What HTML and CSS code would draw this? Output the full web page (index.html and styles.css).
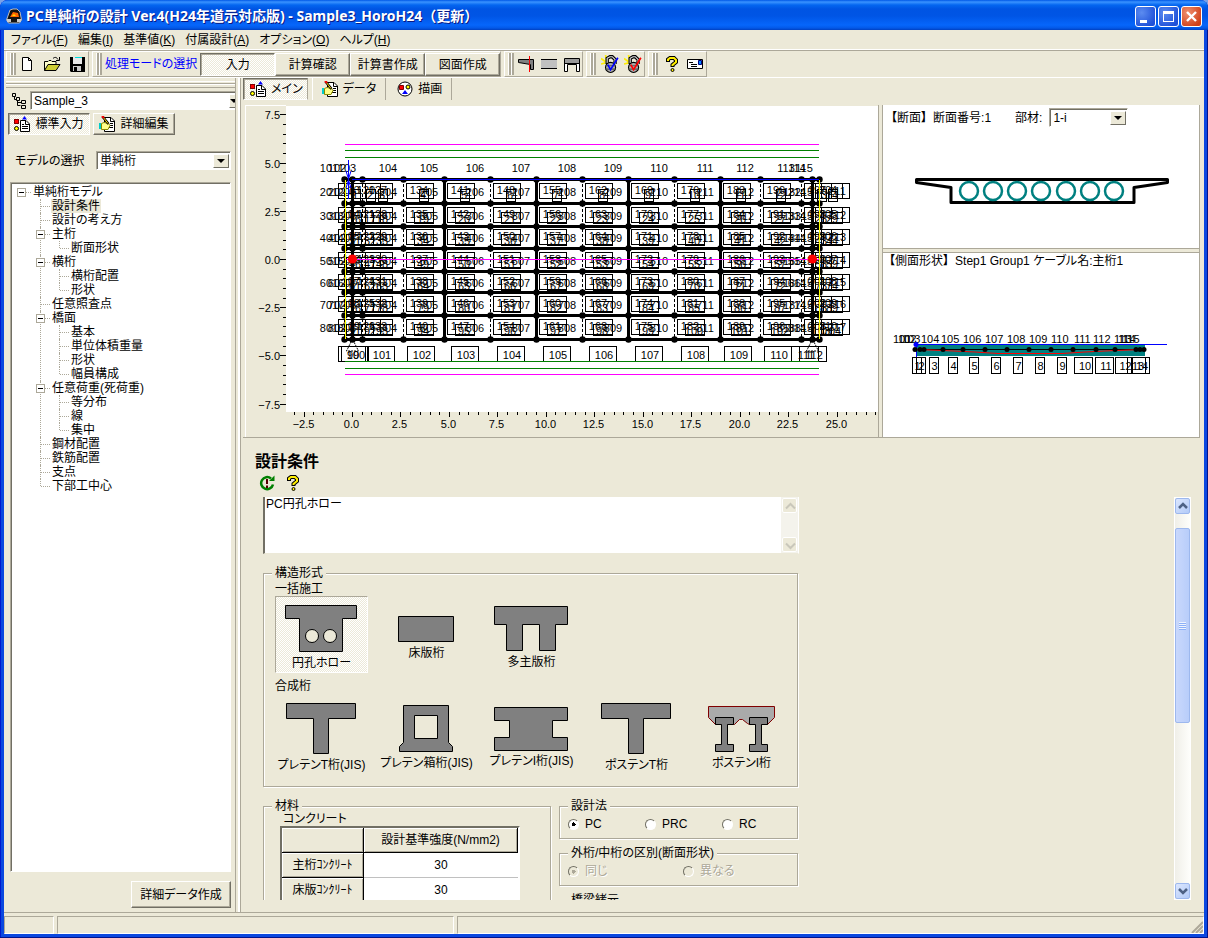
FILE: index.html
```html
<!DOCTYPE html>
<html lang="ja">
<head>
<meta charset="utf-8">
<title>PC単純桁の設計 Ver.4</title>
<link rel="stylesheet" href="styles.css">
</head>
<body>
<svg class="defs" width="0" height="0" aria-hidden="true">
  <symbol id="i-form" viewBox="0 0 16 16"><rect x="0.5" y="3.5" width="4" height="4" fill="#f00" stroke="#800000"/><circle cx="2.5" cy="12.5" r="2" fill="#ff0" stroke="#000"/><path d="M8 3.5 10.500 0 13 3.500z" fill="#00f"/><path d="M6.500 4.500H12L15.500 8V15.500H6.500z" fill="#fff" stroke="#000"/><path d="M11.500 4.500V8.500H15M8 8.500h2M8 10.500h6M8 12.500h6" stroke="#000" fill="none"/></symbol>
  <symbol id="i-edit" viewBox="0 0 16 16"><path d="M5.500 1.500H12L15.500 5V15.500H5.500z" fill="#fff" stroke="#000"/><path d="M11.500 1.500V5.500H15M11 7.500h3M11 9.500h3M9 11.500h5" stroke="#000" fill="none"/><path d="M2.500 7.500 5 6.500 9.500 7.500 11 9.500 9 13.500H2.500z" fill="#ff8" stroke="#880"/><path d="M0 7h2v6H0z" fill="#0cc"/><path d="M3.500 0.500 9.500 8" stroke="#000" stroke-width="2.500"/><path d="M4 1 9 7.500" stroke="#fd0"/><path d="M3 0l2 2" stroke="#f00" stroke-width="2"/></symbol>
  <symbol id="i-help" viewBox="0 0 16 16"><path d="M4 6V3.500L6 2H10L12 4V6L8.500 9V11" fill="none" stroke="#000" stroke-width="4"/><path d="M4 5V3.500L6 2H10L12 4V6L8.500 9V10" fill="none" stroke="#fe0" stroke-width="2"/><circle cx="8.500" cy="14" r="1.500" fill="#fe0" stroke="#000"/></symbol>
  <symbol id="i-lock" viewBox="0 0 16 16"><path d="M0 3l4 3M4 0l1 5M0 8l4-1" stroke="#fe0" stroke-width="1.500"/><path d="M5.500 8V3L8 1.500H10L12.500 4V8" fill="none" stroke="#000" stroke-width="3"/><path d="M5.500 7V3L8 1.500H10L12.500 4V8" fill="none" stroke="#ddd"/><circle cx="8.500" cy="11" r="4.500" fill="#aaa" stroke="#000"/><path d="M4 9.500H13M4 12.500H13" stroke="#555"/><path d="M6 8.500 8.500 13 15 2.500" fill="none" stroke="currentColor" stroke-width="1.500"/></symbol>
</svg>

<div class="window">
  <header class="titlebar">
    <svg class="app-icon" width="16" height="16" viewBox="0 0 16 16"><path d="M4 2 7 1h4l3 3 1.500 8-2 3h-11l-2-3z" fill="#111" stroke="#bbb"/><path d="M4 9 7 4l5 1 1 4z" fill="#f60"/><path d="M6 8 8 6l2 2z" fill="#fd0"/><path d="M1 11h4v3H1zM11 11h4v3h-4z" fill="#ccc"/></svg>
    <h1>PC単純桁の設計 Ver.4(H24年道示対応版) - Sample3_HoroH24（更新）</h1>
    <button class="win-btn" aria-label="最小化"><svg width="19" height="19"><path d="M4 13h7v3H4z" fill="#fff"/></svg></button>
    <button class="win-btn" aria-label="最大化"><svg width="19" height="19"><path d="M4 4h11v11H4zM5 7v7h9V7z" fill="#fff" fill-rule="evenodd"/></svg></button>
    <button class="win-btn close" aria-label="閉じる"><svg width="19" height="19"><path d="M5 5 14 14M14 5 5 14" stroke="#fff" stroke-width="2.400"/></svg></button>
  </header>

  <div class="frame">
    <nav class="menubar">
      <button>ファイル(<u>F</u>)</button><button>編集(<u>I</u>)</button><button>基準値(<u>K</u>)</button><button>付属設計(<u>A</u>)</button><button>オプション(<u>O</u>)</button><button>ヘルプ(<u>H</u>)</button>
    </nav>

    <div class="toolbar">
      <div class="band file">
        <button class="tool" aria-label="新規"><svg width="18" height="18" viewBox="0 0 18 18"><path d="M4.500 2.500h6l3 3v10h-9zM10.500 2.500v3h3" fill="#fff" stroke="#000"/></svg></button>
        <button class="tool" aria-label="開く"><svg width="18" height="18" viewBox="0 0 18 18"><path d="M1.500 15.500V6.500H5l1-1h2l1 1h4v3" fill="#ffc" stroke="#000"/><path d="M1.500 15.500 5 9.500h12l-4 6z" fill="#cc3" stroke="#000"/><path d="M10 3.500c2-2 4-1 5 1M16.500 2v3.500H13" fill="none" stroke="#000"/></svg></button>
        <button class="tool" aria-label="保存"><svg width="18" height="18" viewBox="0 0 18 18"><path d="M2 2h15v15H3l-1-1z"/><path d="M5 2h9v7H5z" fill="#e8e8e8"/><path d="M7 2h7v1H7z" fill="#0dd"/><path d="M5 11h8v5H5z" fill="#ccc"/><path d="M6 12h3v4H6z"/></svg></button>
      </div>
      <div class="band modes">
        <span class="mode-label">処理モードの選択</span>
        <button class="mode pressed">入力</button><button class="mode">計算確認</button><button class="mode">計算書作成</button><button class="mode">図面作成</button>
      </div>
      <div class="band">
        <button class="tool" aria-label="断面図"><svg width="18" height="18" viewBox="0 0 18 18"><path d="M1.500 4.500h15v10h-3v-5l-12-2z" fill="#808080" stroke="#000"/><path d="M12.500 1v16" stroke="#f00"/></svg></button>
        <button class="tool" aria-label="側面図"><svg width="18" height="18" viewBox="0 0 18 18"><path d="M1 5h16v8H1z" fill="#c0c0c0"/><path d="M1 4.500h16M1 13.500h16" stroke="#000"/></svg></button>
        <button class="tool" aria-label="正面図"><svg width="18" height="18" viewBox="0 0 18 18"><path d="M1.500 3.500h15v13h-3v-7h-9v7h-3z" fill="#fff" stroke="#000"/><path d="M2 4h14v4H2z" fill="#999"/><path d="M1 8.500h16" stroke="#000"/></svg></button>
      </div>
      <div class="band roomy">
        <button class="tool lock-blue" aria-label="ロック解除"><svg width="18" height="18"><use href="#i-lock"/></svg></button>
        <button class="tool lock-red" aria-label="ロック"><svg width="18" height="18"><use href="#i-lock"/></svg></button>
      </div>
      <div class="band roomy">
        <button class="tool" aria-label="ヘルプ"><svg width="16" height="16"><use href="#i-help"/></svg></button>
        <button class="tool" aria-label="メール"><svg width="18" height="18" viewBox="0 0 18 18"><path d="M1.500 4.500h15v9h-15z" fill="#fff" stroke="#000"/><path d="M3 7.500h4M5 9.500h6M5 11.500h6" stroke="#000"/><path d="M12.500 5.500h3v4h-3z" fill="#08f" stroke="#000080"/></svg></button>
      </div>
    </div>

    <div class="workspace">
      <aside class="sidebar">
        <div class="gripbar"></div>
        <div class="sample-row">
          <svg width="16" height="16" viewBox="0 0 16 16"><path d="M2.500 3v3.500h3v6h3M6 9.500h3M9 14.500" fill="none" stroke="#000"/><path d="M.5.500h3v3h-3zM4.500 4.500h3v3h-3zM9.500 7.500h4v3h-4zM9.500 12.500h4v3h-4z" fill="#ece9d8" stroke="#000"/></svg>
          <div class="combo cut"><select aria-label="サンプル"><option>Sample_3</option></select><span class="arrow"></span></div>
        </div>
        <div class="input-modes">
          <button class="pressed"><svg width="16" height="16"><use href="#i-form"/></svg>標準入力</button>
          <button class="raised"><svg width="16" height="16"><use href="#i-edit"/></svg>詳細編集</button>
        </div>
        <div class="model-row">
          <label for="model">モデルの選択</label>
          <div class="combo"><select id="model"><option>単純桁</option></select><span class="arrow"></span></div>
        </div>
        <div class="tree-box">
          <ul class="tree">
            <li class="root"><button class="toggle" aria-label="折りたたむ"></button><span>単純桁モデル</span>
              <ul>
                <li><span class="current">設計条件</span></li>
                <li><span>設計の考え方</span></li>
                <li><button class="toggle" aria-label="折りたたむ"></button><span>主桁</span><ul><li><span>断面形状</span></li></ul></li>
                <li><button class="toggle" aria-label="折りたたむ"></button><span>横桁</span><ul><li><span>横桁配置</span></li><li><span>形状</span></li></ul></li>
                <li><span>任意照査点</span></li>
                <li><button class="toggle" aria-label="折りたたむ"></button><span>橋面</span><ul><li><span>基本</span></li><li><span>単位体積重量</span></li><li><span>形状</span></li><li><span>幅員構成</span></li></ul></li>
                <li><button class="toggle" aria-label="折りたたむ"></button><span>任意荷重(死荷重)</span><ul><li><span>等分布</span></li><li><span>線</span></li><li><span>集中</span></li></ul></li>
                <li><span>鋼材配置</span></li>
                <li><span>鉄筋配置</span></li>
                <li><span>支点</span></li>
                <li><span>下部工中心</span></li>
              </ul>
            </li>
          </ul>
        </div>
        <div class="sidebar-foot"><button class="raised">詳細データ作成</button></div>
      </aside>

      <main class="content">
        <nav class="tabs">
          <button class="pressed"><svg width="16" height="16"><use href="#i-form"/></svg>メイン</button>
          <button><svg width="16" height="16"><use href="#i-edit"/></svg>データ</button>
          <button><svg width="16" height="16" viewBox="0 0 16 16"><circle cx="8" cy="8" r="7" fill="#fff" stroke="#000"/><path d="M2.500 4.500h4v4h-4z" fill="#f00" stroke="#800000"/><circle cx="11" cy="6" r="2" fill="#ff0" stroke="#000"/><path d="M5 13 8 9l3 4z" fill="#00f"/></svg>描画</button>
        </nav>

        <div class="views">
          <section class="plan-view"><svg id="plan" viewBox="245 105 633 332" preserveAspectRatio="xMinYMin meet" role="img" aria-label="平面図"></svg></section>
          <div class="side-views">
            <section class="section-view">
              <div class="view-head"><b>【</b>断面<b>】</b><span>断面番号:1</span><label for="member">部材:</label><div class="combo"><select id="member"><option>1-i</option></select><span class="arrow"></span></div></div>
              <svg id="cross" viewBox="883 130 316 118" preserveAspectRatio="xMinYMin meet" role="img" aria-label="断面図"></svg>
            </section>
            <section class="profile-view">
              <div class="view-head"><b>【</b>側面形状<b>】</b><span>Step1 Group1 ケーブル名:主桁1</span></div>
              <svg id="profile" viewBox="883 276 316 160" preserveAspectRatio="xMinYMin meet" role="img" aria-label="側面図"></svg>
            </section>
          </div>
        </div>

        <section class="editor">
          <h2>設計条件</h2>
          <div class="editor-tools">
            <button class="tool" aria-label="更新"><svg width="16" height="16" viewBox="0 0 16 16"><path d="M12 3.500A6 6 0 1 0 14 9.500" fill="none" stroke="#008000" stroke-width="2.500"/><path d="M10 6h5.500V.500z" fill="#008000"/><path d="M8 4v5M8 10.500v2.500" stroke="#500" stroke-width="2"/></svg></button>
            <button class="tool" aria-label="ヘルプ"><svg width="16" height="16"><use href="#i-help"/></svg></button>
          </div>
          <div class="editor-body">
            <div class="form">
              <div class="memo"><textarea aria-label="コメント">PC円孔ホロー</textarea>
                <div class="memo-bar"><svg width="15" height="15"><path d="M3 9.500 7.500 5 12 9.500" fill="none" stroke="#c9c7ba" stroke-width="2"/></svg><svg width="15" height="15"><path d="M3 5.500 7.500 10 12 5.500" fill="none" stroke="#c9c7ba" stroke-width="2"/></svg></div>
              </div>

              <fieldset class="types"><legend>構造形式</legend>
                <h3>一括施工</h3>
                <div class="type-row">
                  <button class="type pressed"><svg width="73" height="48"><path d="M.5.500h71v13h-14v33h-43v-33H.5z" class="conc"/><circle cx="27" cy="31" r="6.500" class="hole"/><circle cx="45" cy="31" r="6.500" class="hole"/></svg>円孔ホロー</button>
                  <button class="type"><svg width="57" height="27"><path d="M.5.500h55v25H.5z" class="conc"/></svg>床版桁</button>
                  <button class="type"><svg width="75" height="46"><path d="M.5.500h73v18h-12v26h-16v-26h-17v26h-16v-26H.5z" class="conc"/></svg>多主版桁</button>
                </div>
                <h3>合成桁</h3>
                <div class="type-row">
                  <button class="type"><svg width="71" height="52"><path d="M.5.500h69v15h-27v35h-15v-35H.5z" class="conc"/></svg>プレテンT桁(JIS)</button>
                  <button class="type"><svg width="55" height="48"><path d="M4.500.500h45v37l4 4v5H.5v-5l4-4z" class="conc"/><path d="M15.500 10.500h23v23h-23z" class="hole"/></svg>プレテン箱桁(JIS)</button>
                  <button class="type"><svg width="75" height="44"><path d="M.5.500h73v13h-15v17h15v13H.5v-13h15v-17H.5z" class="conc"/></svg>プレテンI桁(JIS)</button>
                  <button class="type"><svg width="71" height="52"><path d="M.5.500h69v15h-27v35h-15v-35H.5z" class="conc"/></svg>ポステンT桁</button>
                  <button class="type"><svg width="68" height="47"><path d="M.5.500h66v11l-7 7h-18l-2-1-5-4h-3l-5 5H7.500l-7-7z" fill="#aaa" stroke="#800000"/><path d="M7.500 11.500h18v7h-6v20h6v7h-18v-7h6v-20h-6zM41.500 11.500h18v7h-6v20h6v7h-18v-7h6v-20h-6z" class="conc"/></svg>ポステンI桁</button>
                </div>
              </fieldset>

              <div class="lower">
                <fieldset class="material"><legend>材料</legend>
                  <h3>コンクリート</h3>
                  <table><thead><tr><th></th><th>設計基準強度(N/mm2)</th></tr></thead>
                  <tbody><tr><th>主桁ｺﾝｸﾘｰﾄ</th><td>30</td></tr><tr><th>床版ｺﾝｸﾘｰﾄ</th><td>30</td></tr></tbody></table>
                </fieldset>
                <div class="options">
                  <fieldset><legend>設計法</legend><div class="radios three">
                    <label><input type="radio" name="method" checked>PC</label><label><input type="radio" name="method">PRC</label><label><input type="radio" name="method">RC</label></div></fieldset>
                  <fieldset><legend>外桁/中桁の区別(断面形状)</legend><div class="radios two">
                    <label class="off"><input type="radio" name="diff" checked disabled>同じ</label><label class="off"><input type="radio" name="diff" disabled>異なる</label></div></fieldset>
                  <fieldset class="end-line"><legend>橋梁緒元</legend></fieldset>
                </div>
              </div>
            </div>
            <div class="scrollbar">
              <div class="sb-btn"><svg width="14" height="14"><path d="M3 9 7 5l4 4" fill="none" stroke="#4d6185" stroke-width="2.500"/></svg></div>
              <div class="sb-track"><div class="sb-thumb"><svg width="7" height="8"><path d="M0 .5h7M0 2.500h7M0 4.500h7M0 6.500h7" stroke="#eef4fe"/><path d="M0 1.500h7M0 3.500h7M0 5.500h7M0 7.500h7" stroke="#8cb0f8"/></svg></div></div>
              <div class="sb-btn"><svg width="14" height="14"><path d="M3 5l4 4 4-4" fill="none" stroke="#4d6185" stroke-width="2.500"/></svg></div>
            </div>
          </div>
        </section>
      </main>
    </div>

    <footer class="statusbar"><div></div><div></div><div><svg width="12" height="12"><path d="M1 12 12 1M5 12l7-7M9 12l3-3" stroke="#aca899" stroke-width="2"/></svg></div></footer>
  </div>
</div>
<script src="app.js"></script>
</body>
</html>
```

FILE: styles.css
```css
:root {
  --face: #ece9d8;
  --shade: #aca899;
  --dark: #716f64;
  --font: "Liberation Sans", "Noto Sans CJK JP", sans-serif;
}
* { box-sizing: border-box; }
html, body { height: 100%; }
body { margin: 0; background: #7ba2e7; color: #000; font: 12px/14px var(--font); font-feature-settings: "palt"; overflow: hidden; }
button, select, input, textarea { font: inherit; font-feature-settings: inherit; color: inherit; margin: 0; }
button { background: none; border: 0; padding: 0; white-space: nowrap; }
svg { display: block; flex: none; }
.defs { position: absolute; }
h1, h2, h3, ul { margin: 0; padding: 0; font-weight: normal; }

.window { height: 100%; display: flex; flex-direction: column; background: #0a48e0; border-radius: 8px 8px 0 0; overflow: hidden; box-shadow: inset -1px -1px #00138c, inset 1px 0 #0019cf; }
.titlebar { flex: none; height: 30px; display: flex; align-items: center; gap: 2px; padding: 2px 6px 0 6px;
  background: linear-gradient(#0058e6 0, #3a93ff 2px, #0466f0 5px, #0054e3 9px, #0055e5 16px, #0666fb 25px, #0359e8 28px, #0040c0 30px); }
.titlebar h1 { flex: 1; min-width: 0; padding-left: 2px; color: #fff; font: bold 14px/18px "Noto Sans", "Noto Sans CJK JP", sans-serif; white-space: nowrap; overflow: hidden; text-shadow: 1px 1px #0a1883; }
.win-btn { width: 21px; height: 21px; border: 1px solid #fff; border-radius: 3px; background: radial-gradient(circle at 30% 30%, #5c8cf0, #1e50d8 80%); }
.win-btn.close { background: radial-gradient(circle at 30% 30%, #f09070, #d04018 80%); }

.frame { flex: 1; min-height: 0; margin: 0 4px 4px; display: flex; flex-direction: column; background: var(--face); }
.menubar { flex: none; height: 20px; display: flex; align-items: center; gap: 10px; padding-left: 7px; border-bottom: 1px solid #fff; }

.toolbar { flex: none; height: 28px; display: flex; gap: 3px; padding-left: 2px; border-top: 1px solid var(--shade); border-bottom: 1px solid #fff; }
.band { display: flex; align-items: center; gap: 5px; padding: 0 1px 0 3px; height: 26px; border: 1px solid; border-color: #fff var(--shade) var(--shade) #fff; }
.band::before { content: ""; width: 6px; height: 22px; margin-right: -2px; background: linear-gradient(90deg, #fff 0 1px, var(--shade) 1px 3px, #fff 3px 4px, var(--shade) 4px 6px); }
.band.file { gap: 7px; padding-right: 2px; }
.band.file::before { margin-right: -5px; }
.band.modes { padding-right: 0; gap: 0; }
.band.modes::before { margin-right: 3px; }
.band.roomy { padding-right: 2px; }
.band.roomy::before { margin-right: 0; }
.mode-label { color: #00f; padding-right: 3px; }
.tool { width: 18px; height: 18px; display: grid; place-items: center; }
.lock-blue { color: #00f; }
.lock-red { color: #f00; }
.mode { width: 75px; height: 23px; padding-top: 1px; }
.mode, .raised { border: 1px solid; border-color: #fff var(--dark) var(--dark) #fff; box-shadow: inset -1px -1px var(--shade); }
.pressed, .mode.pressed { border: 1px solid; border-color: var(--dark) #fff #fff var(--dark); box-shadow: inset 1px 1px var(--shade);
  background: repeating-conic-gradient(#fff 0 25%, var(--face) 0 50%) 0 0 / 2px 2px; }

.workspace { flex: 1; min-height: 0; display: flex; border-bottom: 1px solid var(--shade); }
.sidebar { flex: none; width: 237px; display: flex; flex-direction: column; padding-top: 3px; border-right: 1px solid var(--shade); box-shadow: inset -2px 0 #fff, inset -4px 0 var(--face), inset -5px 0 var(--shade); }
.gripbar { height: 7px; margin: 0 5px 0 2px; border: solid; border-width: 1px 0 1px; border-color: #fff transparent var(--shade); background: linear-gradient(transparent 1px, var(--shade) 1px 2px, #fff 2px 3px, transparent 3px); }
.sample-row { display: flex; align-items: center; gap: 2px; margin: 3px 5px 0 8px; }
.combo { display: flex; height: 19px; background: #fff; border: 1px solid; border-color: var(--shade) #fff #fff var(--shade); box-shadow: inset 1px 1px var(--dark); padding: 2px 1px 1px 2px; }
.combo select { appearance: none; flex: 1; min-width: 0; border: 0; background: none; padding: 0 1px; line-height: 15px; outline: 0; }
.combo .arrow { width: 16px; border: 1px solid; border-color: #fff var(--dark) var(--dark) #fff; background: var(--face); display: grid; place-items: center; }
.combo .arrow::before { content: ""; border: solid transparent; border-width: 4px 4px 0; border-top-color: #000; }
.sample-row .combo { flex: 1; }
.combo.cut { padding-right: 0; border-right: 0; }
.combo.cut .arrow { width: 6px; border-right: 0; overflow: hidden; justify-items: start; }
.input-modes { display: flex; gap: 3px; margin: 3px 4px 0; }
.input-modes button { height: 22px; width: 82px; display: flex; align-items: center; justify-content: center; gap: 5px; }
.model-row { display: flex; align-items: center; gap: 9px; margin: 16px 9px 0 11px; }
.model-row .combo { flex: 1; }
.model-row label { width: 72px; white-space: nowrap; }
.tree-box { flex: 1; min-height: 0; margin: 12px 9px 0 6px; background: #fff; border: 1px solid; border-color: var(--shade) #fff #fff var(--shade); box-shadow: inset 1px 1px var(--dark); padding: 2px 3px; overflow: hidden; }
.tree li { position: relative; list-style: none; padding-left: 19px; }
.tree span { display: block; width: max-content; height: 14px; padding: 0 1px; margin-left: -1px; white-space: nowrap; }
.tree .current { background: var(--face); }
.tree li::before { content: ""; position: absolute; left: 7px; top: 0; bottom: 0; border-left: 1px dotted var(--shade); }
.tree li:last-child::before { bottom: auto; height: 7px; }
.tree li::after { content: ""; position: absolute; left: 8px; top: 7px; width: 9px; border-top: 1px dotted var(--shade); }
.tree .root::before { display: none; }
.toggle { position: absolute; z-index: 1; left: 3px; top: 3px; width: 9px; height: 9px; border: 1px solid var(--shade); background: linear-gradient(#000, #000) center / 5px 1px no-repeat #fff; }
.sidebar-foot { display: flex; justify-content: flex-end; padding: 9px 9px 4px 0; }
.sidebar-foot button { width: 100px; height: 27px; }

.content { flex: 1; min-width: 0; display: flex; flex-direction: column; padding: 0 4px 0 2px; }
.tabs { flex: none; display: flex; height: 22px; margin-bottom: 5px; }
.tabs button { display: flex; align-items: center; gap: 5px; padding: 0 9px; border-right: 1px solid var(--shade); margin-right: 2px; }
.tabs .pressed { height: 22px; padding: 0 4px 0 6px; margin-right: 4px; }
.tabs .pressed + button { border-left: 1px solid #fff; }

.views { flex: none; display: flex; padding-left: 2px; border-bottom: 1px solid var(--shade); }
.plan-view { flex: 633 0 0; min-width: 0; border-right: 1px solid var(--shade); }
.plan-view svg, .side-views svg { width: 100%; height: auto; font: 11px "Liberation Sans", sans-serif; }
.side-views { flex: 316 0 0; min-width: 0; margin-left: 3px; display: flex; flex-direction: column; gap: 3px; border: solid var(--shade); border-width: 0 1px 0 1px; }
.side-views section { background: #fff; border-bottom: 1px solid var(--shade); overflow: hidden; }
.side-views .profile-view { flex: 1; border-top: 1px solid var(--shade); border-bottom: 0; }
.view-head { display: flex; align-items: center; height: 25px; padding: 0 8px; white-space: nowrap; }
.profile-view .view-head { height: 16px; margin-bottom: 7px; padding-left: 6px; }
.view-head > span { margin: 0 24px 0 6px; }
.view-head .combo { width: 79px; margin-left: 7px; }

.editor { flex: 1; min-height: 0; display: flex; flex-direction: column; padding: 12px 9px 12px 12px; }
.editor h2 { font: bold 16px/20px "Noto Sans CJK JP", sans-serif; }
.editor-tools { display: flex; gap: 8px; padding: 4px 0 0 3px; }
.editor-body { flex: 1; min-height: 0; display: flex; justify-content: space-between; margin: 5px 0 0 8px; }
.form { width: 536px; overflow: hidden; }
.memo { display: flex; height: 57px; background: #fff; border: solid; border-width: 0 1px 1px 2px; border-color: transparent #fff var(--face) var(--dark); }
.memo textarea { flex: 1; border: 0; padding: 0 1px; resize: none; outline: 0; background: none; }
.memo-bar { width: 17px; padding: 1px; display: flex; flex-direction: column; justify-content: space-between; background: #f4f3ec; }
.memo-bar svg { border: 1px solid #fff; background: var(--face); border-radius: 2px; }

fieldset { min-width: 0; margin: 0; padding: 0; border: 1px solid var(--shade); box-shadow: 1px 1px #fff, inset 1px 1px #fff; }
legend { margin-left: 8px; padding: 0 3px; height: 14px; background: var(--face); white-space: nowrap; }
h3 { font-size: 12px; line-height: 14px; }
.types { margin: 12px 1px 0 0; height: 221px; }
.types h3 { padding-left: 11px; height: 16px; line-height: 18px; }
.types .type-row + h3 { height: 20px; line-height: 26px; }
.type-row { display: grid; grid-template-columns: repeat(5, 105px); padding-left: 5px; height: 77px; align-items: center; justify-items: center; }
.type { width: 93px; height: 77px; padding-top: 6px; display: flex; flex-direction: column; align-items: center; justify-content: center; gap: 3px; overflow: visible; }
.type-row + h3 + .type-row { margin-top: 3px; }
.type.pressed { border-color: var(--shade) #fff #fff var(--shade); box-shadow: none; }
.conc { fill: #808080; stroke: #000; }
.hole { fill: var(--face); stroke: #000; }
.lower { display: grid; grid-template-columns: 288px 240px; gap: 8px; margin-top: 12px; }
.material { height: 130px; }
.material h3 { padding-left: 19px; height: 13px; line-height: 12px; }
table { margin-left: 16px; border-collapse: separate; border-spacing: 0; width: 240px; border: 2px solid; border-color: var(--dark) #fff #fff var(--dark); table-layout: fixed; }
th, td { height: 25px; padding: 0; font-weight: normal; text-align: center; white-space: nowrap; }
th { background: var(--face); border: solid #000; border-width: 0 1px 1px 0; box-shadow: inset 1px 1px #fff, inset -1px -1px var(--shade); }
th:first-child { width: 82px; }
td { background: #fff; border-bottom: 1px solid #c0c0c0; }
.options { display: flex; flex-direction: column; gap: 7px; }
.options fieldset { height: 40px; margin-right: 1px; }
.radios { display: grid; align-items: center; height: 22px; padding-left: 8px; }
.three { grid-template-columns: repeat(3, 77px); }
.two { grid-template-columns: repeat(2, 115px); }
.radios label { display: flex; align-items: center; gap: 6px; }
.radios input { appearance: none; width: 11px; height: 11px; border: 1px solid; border-color: var(--dark) #fff #fff var(--dark); border-radius: 50%; background: #fff; }
.radios input:checked { background: radial-gradient(circle, #000 0 2px, #fff 2px); }
.radios .off { color: var(--shade); text-shadow: 1px 1px #fff; }
.radios .off input { background: var(--face); }
.radios .off input:checked { background: radial-gradient(circle, var(--shade) 0 2px, var(--face) 2px); }

.scrollbar { width: 17px; display: flex; flex-direction: column; background: linear-gradient(90deg, #f0efe8, #fefefb); border: 1px solid #fff; }
.sb-btn { height: 16px; border: 1px solid #9db8ee; border-radius: 2px; background: linear-gradient(135deg, #dce7fe, #b2caf8); }
.sb-track { flex: 1; display: flex; flex-direction: column; padding-top: 14px; }
.sb-thumb { height: 55%; border: 1px solid #9db8ee; border-radius: 2px; background: linear-gradient(90deg, #c9d8fc, #b8cdfa); display: grid; place-items: center; }

.statusbar { flex: none; height: 18px; margin-top: 3px; display: flex; gap: 3px; }
.statusbar div { border: 1px solid; border-color: var(--shade) #fff #fff var(--shade); height: 18px; flex: 1 0 0; }
.statusbar div:first-child { flex: none; width: 50px; }
.statusbar div:nth-child(2) { flex: none; width: 397px; }
.statusbar div:last-child { display: flex; justify-content: flex-end; align-items: flex-end; }
```

FILE: app.js
```js
const NS = "http://www.w3.org/2000/svg";
const painter = (id) => {
  const root = document.getElementById(id);
  const add = (tag, attrs, text) => {
    const el = document.createElementNS(NS, tag);
    for (const k in attrs) el.setAttribute(k, attrs[k]);
    if (text !== undefined) el.textContent = text;
    root.appendChild(el);
  };
  return {
    add,
    line: (x1, y1, x2, y2, stroke = "#000", w = 1, dash) =>
      add("line", { x1, y1, x2, y2, stroke, "stroke-width": w, ...(dash ? { "stroke-dasharray": dash } : {}) }),
    text: (x, y, s, anchor = "middle") => add("text", { x, y, "text-anchor": anchor }, s),
    box: (x, y, w, h) => add("rect", { x: x + 0.5, y: y + 0.5, width: w, height: h, fill: "none", stroke: "#000" }),
    dot: (cx, cy, r, fill = "#000") => add("circle", { cx, cy, r, fill }),
  };
};

// Plan of the girder grid with its rulers
const p = painter("plan");
p.add("rect", { x: 245, y: 105, width: 633, height: 332, fill: "#ece9d8" });
p.add("rect", { x: 286, y: 106, width: 592, height: 306, fill: "#fff" });
p.line(245, 105.5, 286, 105.5, "#fff");
p.line(245.5, 105, 245.5, 437, "#fff");
for (let i = -15; i <= 15; i++) {
  const y = Math.round(259 - i * 9.64) + 0.5;
  const major = i % 5 === 0;
  p.line(major ? 280 : 283, y, 286, y);
  if (major) p.text(280, y + 4, (i / 2).toFixed(1).replace("-", "−"), "end");
}
for (let i = -6; i <= 54; i++) {
  const x = Math.round(352 + i * 9.69) + 0.5;
  if (x > 877) break;
  const major = i % 5 === 0;
  p.line(x, 412, x, major ? 417 : 415);
  if (major) p.text(x - 1, 428, (i / 2).toFixed(1).replace("-", "−"));
}
const nx = [344, 352, 362, 403, 444, 490, 536, 582, 628, 674, 720, 760, 801, 812, 819];
const ny = [179, 203, 226, 248, 271, 292, 315, 339];
nx.forEach((x, c) => {
  const solid = [1, 4, 6, 8, 10, 13].includes(c);
  p.line(x + 0.5, 179, x + 0.5, 339, "#000", solid ? 3 : 1, solid ? "" : "3 2");
});
ny.forEach((y) => {
  p.line(344, y + 0.5, 819, y + 0.5, "#000", 3);
  nx.forEach((x) => p.dot(x + 0.5, y + 0.5, 3.2));
});
nx.forEach((x, c) => p.text(x - 15, 172, 101 + c));
for (let r = 0; r < 7; r++) {
  const mid = Math.round((ny[r] + ny[r + 1]) / 2);
  nx.forEach((x, c) => {
    p.text(x - 15, mid + 5, (r + 2) * 100 + 1 + c);
    if (c === 14) return;
    const bx = c < 2 ? x - 6 + c * 7 : x + 3;
    p.box(bx, mid - 8, 27, 15);
    p.text(bx + 13, mid + 3, 113 + c * 7 + r);
    p.box(bx + (r ? 8 : 13), mid - (r ? 3 : 2), r ? 19 : 9, r ? 11 : 12);
    p.text(bx + 17, mid + 8, r * 15 + c + 1);
  });
  p.box(821, mid - 8, 28, 15);
  p.text(837, mid + 4, 211 + r);
}
p.add("path", { d: "M352.500 339l-6 12h12zM812.500 339l-6 12h12z", fill: "none", stroke: "#000", "stroke-dasharray": "2 1" });
[[338, 99], [341, 100], [367, 101], [407, 102], [451, 103], [497, 104], [543, 105], [589, 106], [635, 107], [681, 108], [724, 109], [764, 110], [791, 111], [799, 112]].forEach(([x, n]) => {
  p.box(x, 346, 27, 15);
  p.text(x + 15, 359, n);
});
[[144, "#f0f"], [150, "#008000"], [157, "#008000"], [259, "#f0f"], [361, "#008000"], [368, "#008000"], [374, "#f0f"]].forEach(([y, c]) => p.line(345, y + 0.5, 819, y + 0.5, c));
p.line(352, 179.5, 819, 179.5, "#00f");
p.line(345.5, 180, 345.5, 339, "#ff0");
p.line(819.5, 180, 819.5, 339, "#ff0");
p.line(348.5, 160, 348.5, 199, "#00f");
p.add("path", { d: "M346 171l2.500 8 2.500-8M346 188l2.500-8 2.500 8", fill: "none", stroke: "#00f" });
p.dot(352.5, 259, 4.5, "#f00");
p.dot(812.5, 259, 4.5, "#f00");

// Cross-section of the slab with its voids
const s = painter("cross");
s.add("path", { d: "M916.500 179.500H1167.500V182.500L1134 187.500V202.500H951V187.500L916.500 182.500Z", fill: "none", stroke: "#000", "stroke-width": 3, "stroke-linejoin": "round" });
[969, 993, 1017, 1041, 1066, 1090, 1114].forEach((cx) => s.add("circle", { cx, cy: 191, r: 9, fill: "none", stroke: "#008080", "stroke-width": 2.5 }));

// Side elevation with the cable line
const e = painter("profile");
e.add("rect", { x: 916, y: 345, width: 229, height: 11, fill: "#008080" });
e.line(915, 344.5, 1167, 344.5, "#00f");
e.line(916.5, 344, 916.5, 366, "#00f");
e.line(916, 349.5, 1145, 349.5);
e.add("polyline", { points: "916,349.5 943,350.5 975,352 998,353.500 1062,353.500 1085,352 1115,350.500 1144,349.500", fill: "none", stroke: "#f00" });
const ex = [915, 920, 924, 943, 963, 985, 1007, 1029, 1051, 1073, 1096, 1115, 1136, 1140, 1144];
ex.forEach((x, i) => {
  e.dot(x, 349.5, 2.5);
  e.text(x - 22, 343, 101 + i, "start");
});
e.dot(916, 344.5, 2.5, "#00f");
[[912, 9], [916, 9], [929, 9], [948, 9], [969, 9], [991, 9], [1013, 9], [1035, 9], [1057, 9], [1074, 18], [1095, 18], [1115, 17], [1127, 18], [1131, 18]].forEach(([x, w], i) => {
  e.box(x, 357, w, 16);
  e.text(x + w / 2 + (i > 8 ? 2 : 1), 370, i + 1);
});
```
